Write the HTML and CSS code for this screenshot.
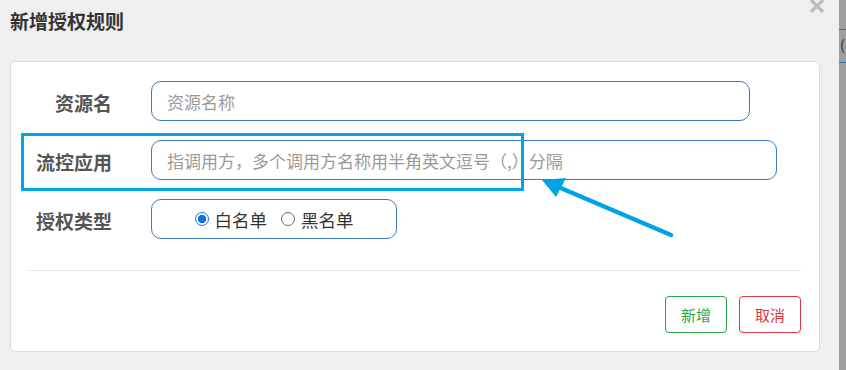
FILE: index.html
```html
<!DOCTYPE html>
<html lang="zh-CN">
<head>
  <meta charset="UTF-8" />
  <meta name="viewport" content="width=device-width, initial-scale=1" />
  <title>新增授权规则</title>
  <link rel="stylesheet" href="styles.css">
</head>
<body>
  <div class="page">
    <div class="modal">
      <div class="modal-header">
        <h4 class="modal-title">新增授权规则</h4>
        <svg class="close" width="16" height="14" viewBox="0 0 16 14">
          <path d="M2 1 L14 13 M14 1 L2 13" stroke="#bdbdbd" stroke-width="3.2" fill="none" />
        </svg>
      </div>

      <div class="card">
        <div class="form-row">
          <label class="form-label">资源名</label>
          <input class="form-input w-resource" type="text" placeholder="资源名称">
        </div>
        <div class="form-row">
          <label class="form-label">流控应用</label>
          <input class="form-input w-app" type="text" placeholder="指调用方，多个调用方名称用半角英文逗号（,）分隔">
        </div>
        <div class="form-row">
          <label class="form-label">授权类型</label>
          <div class="radio-group">
            <label class="radio"><span class="radio-dot checked"></span>白名单</label>
            <label class="radio"><span class="radio-dot"></span>黑名单</label>
          </div>
        </div>

        <div class="divider"></div>

        <div class="actions">
          <button class="btn btn-green">新增</button>
          <button class="btn btn-red">取消</button>
        </div>
      </div>
    </div>

    <div class="backdrop-edge">
      <div class="edge-cell">(</div>
    </div>
  </div>

  <!-- annotation overlay -->
  <div class="mark-box"></div>
  <svg class="mark-arrow" width="846" height="370" viewBox="0 0 846 370">
    <line x1="671" y1="235" x2="556" y2="186" stroke="#00a2e8" stroke-width="4.5" stroke-linecap="round" />
    <polygon points="542,180 566,178 556,197" fill="#00a2e8" />
  </svg>
</body>
</html>
```

FILE: styles.css
```css
* {
  box-sizing: border-box;
}
body {
  margin: 0;
  background-color: #efefef;
  font-family: "Noto Sans CJK SC", "Noto Sans", sans-serif;
  color: #333;
}
.page {
  display: flex;
  width: 846px;
  height: 370px;
  overflow: hidden;
}
.modal {
  flex: none;
  width: 839px;
  padding: 0 19px 0 10px;
}
.modal-header {
  position: relative;
  height: 61px;
}
.modal-title {
  margin: 0;
  padding-top: 7px;
  font-size: 19px;
  font-weight: bold;
  color: #333;
  line-height: 28px;
}
.close {
  position: absolute;
  right: -5px;
  top: -1px;
}
.card {
  background-color: #fff;
  border: 1px solid #dcdcdc;
  border-radius: 5px;
  height: 291px;
  padding: 19px 18px 0 18px;
}
.form-row {
  display: flex;
  align-items: center;
  height: 40px;
  margin-bottom: 19px;
}
.form-label {
  width: 83px;
  margin-right: 39px;
  text-align: right;
  font-size: 19px;
  font-weight: bold;
  color: #555;
  padding-top: 3px;
}
.form-input {
  height: 40px;
  border: 1px solid #3a7bb8;
  border-radius: 10px;
  padding: 0 15px;
  font-family: inherit;
  font-size: 17px;
  color: #333;
  outline: none;
}
.form-input::placeholder {
  color: #9a9a9a;
}
.w-resource {
  width: 599px;
}
.w-app {
  width: 626px;
}
.radio-group {
  width: 246px;
  height: 40px;
  border: 1px solid #3a7bb8;
  border-radius: 10px;
  display: flex;
  align-items: center;
  justify-content: center;
  gap: 14px;
}
.radio {
  display: flex;
  align-items: center;
  gap: 6px;
  font-size: 17.5px;
  color: #333;
}
.radio-dot {
  width: 14px;
  height: 14px;
  border-radius: 50%;
  border: 1px solid #6b6b6b;
  background-color: #fff;
}
.radio-dot.checked {
  border: 1px solid #0b74e5;
  background: radial-gradient(circle, #0b74e5 0 4px, #fff 4.5px);
}
.divider {
  height: 1px;
  background-color: #e3e3e3;
  margin-top: 31px;
}
.actions {
  display: flex;
  justify-content: flex-end;
  gap: 12px;
  margin-top: 25px;
}
.btn {
  width: 62px;
  height: 37px;
  background-color: #fff;
  border-radius: 4px;
  font-family: inherit;
  font-size: 15px;
  padding: 0;
}
.btn-green {
  border: 1px solid #28a745;
  color: #28a745;
}
.btn-red {
  border: 1px solid #dc3545;
  color: #dc3545;
}
.backdrop-edge {
  flex: none;
  width: 7px;
  height: 370px;
  background-color: #9f9f9f;
  padding-top: 29px;
  overflow: hidden;
}
.edge-cell {
  height: 34px;
  border-top: 1px solid #2f6da6;
  border-bottom: 1px solid #2f6da6;
  padding-left: 1px;
  font-size: 14px;
  color: #1d2a55;
  line-height: 28px;
}
.mark-box {
  position: absolute;
  left: 21px;
  top: 133px;
  width: 503px;
  height: 58px;
  border: 3px solid #00a2e8;
}
.mark-arrow {
  position: absolute;
  left: 0;
  top: 0;
  pointer-events: none;
}
```
